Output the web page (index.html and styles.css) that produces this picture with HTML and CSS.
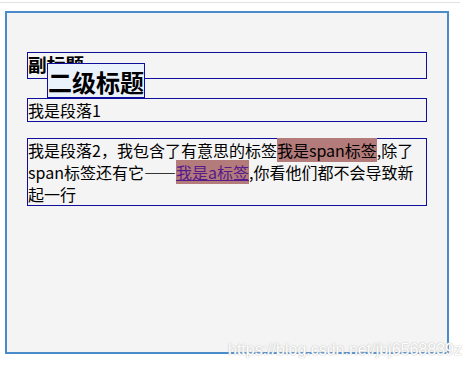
FILE: index.html
```html
<!DOCTYPE html>
<html lang="zh-CN"><head>
    <meta charset="UTF-8">
    <meta name="viewport" content="width=device-width, initial-scale=1.0">
    <title>块级元素与行内元素</title>
    <link rel="stylesheet" href="styles.css">
</head>
<body>

    <div class="topline"></div>

    <div id="demo-box">
        <h3>副标题</h3>
        <h2>二级标题</h2>
        <p class="first">我是段落1</p>
        <p>我是段落2，我包含了有意思的标签<span>我是span标签</span>,除了span标签还有它——<a href="#">我是a标签</a>,你看他们都不会导致新起一行</p>
    </div>

    <div class="watermark">https://blog.csdn.net/jbj6568839z</div>

</body></html>
```

FILE: styles.css
```css
/* block vs inline demo */
body {
    margin: 0;
    padding-top: 2px;
    background-color: #ffffff;
    font-family: "Noto Sans CJK SC", "Liberation Sans", sans-serif;
    color: #000000;
    position: relative;
    height: 368px;
    overflow: hidden;
}

.topline {
    width: 460px;
    border-top: 1px solid #e2e2e2;
}

#demo-box {
    box-sizing: border-box;
    width: 444px;
    height: 343px;
    margin: 8px 0 0 5px;
    padding: 39px 20px 0 20px;
    background-color: #f4f4f4;
    border: 2px solid #4a8bc9;
}

h3 {
    margin: 0;
    height: 25px;
    font-size: 18.7px;
    line-height: 22px;
    border: 1px solid #0f0f9c;
}

/* sits on top of the h3 */
h2 {
    position: relative;
    width: fit-content;
    margin: -16px 0 0 20px;
    padding-top: 2px;
    font-size: 24px;
    line-height: 31px;
    background-color: #eaf3fc;
    border: 1px solid #0f0f9c;
}

p {
    margin: 16px 0 0 0;
    font-size: 16px;
    line-height: 22px;
    border: 1px solid #0f0f9c;
}

p.first {
    margin-top: 0;
}

span {
    background-color: #b47b7b;
}

a {
    color: #551a8b;
    text-decoration: underline;
    background-color: #b47b7b;
}

.watermark {
    position: absolute;
    left: 228px;
    top: 341px;
    font-family: "Liberation Sans", sans-serif;
    font-size: 16px;
    color: #ffffff;
    text-shadow: 0 0 1px #b8b8b8, 0 0 2px #d0d0d0;
}
```
